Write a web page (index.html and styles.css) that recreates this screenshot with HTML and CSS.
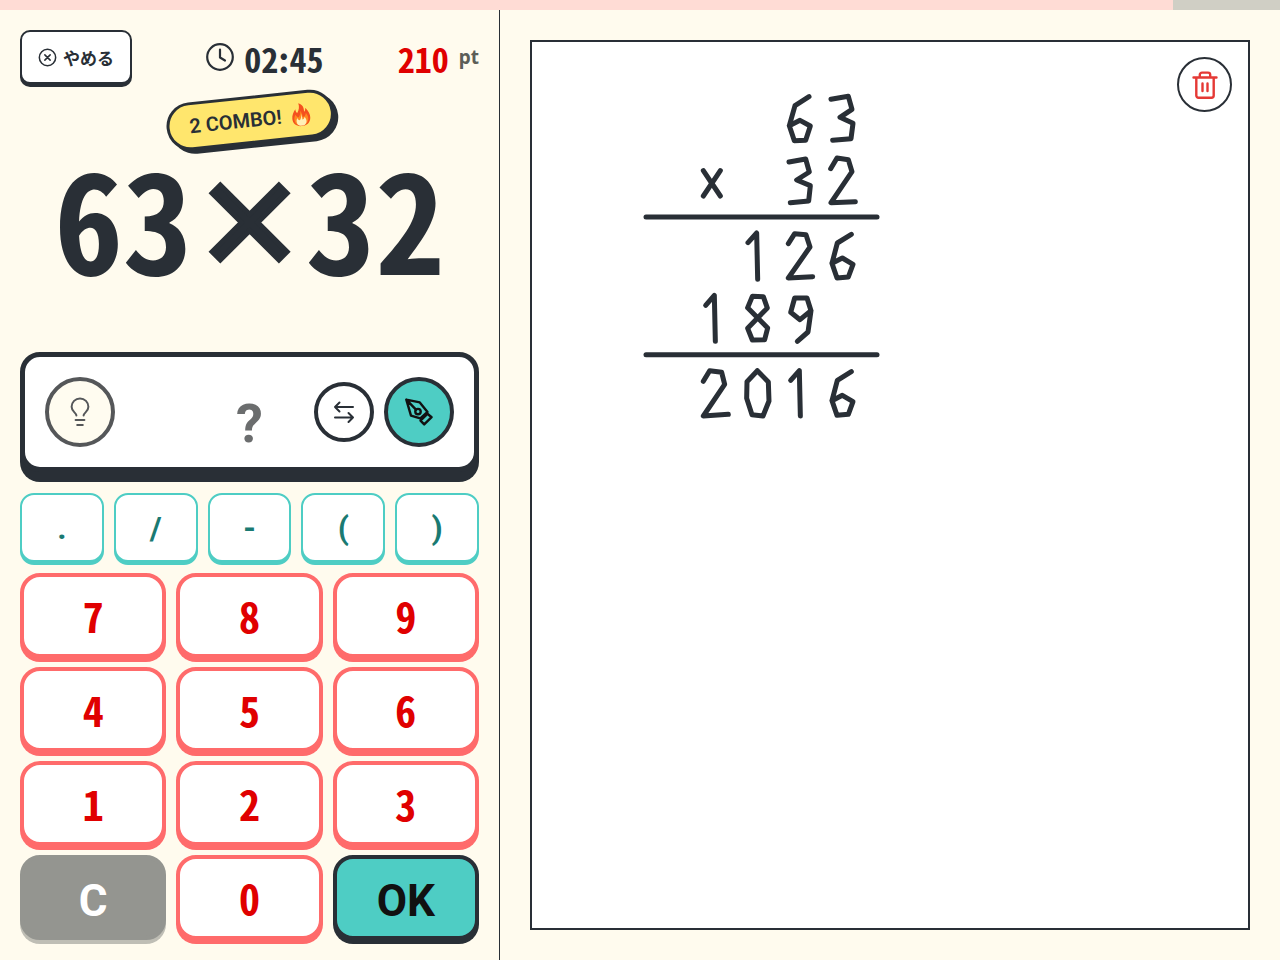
FILE: index.html
```html
<!DOCTYPE html>
<html lang="ja">
<head>
    <meta charset="UTF-8">
    <meta name="viewport" content="width=device-width, initial-scale=1.0">
    <title>けいさんドリル</title>
    <link rel="stylesheet" href="styles.css">
</head>
<body>
    <div class="progress">
        <div class="progress-bar" style="width: 91.67%"></div>
    </div>

    <main class="layout">
        <section class="panel">
            <header class="status">
                <button type="button" class="quit-btn">
                    <svg class="quit-icon" viewBox="0 0 20 20">
                        <circle cx="10" cy="10" r="8.6"/>
                        <path d="M7.2 7.2l5.6 5.6M12.8 7.2l-5.6 5.6"/>
                    </svg>
                    やめる
                </button>
                <div class="timer">
                    <svg class="clock-icon" viewBox="0 0 28 28">
                        <circle cx="14" cy="14" r="12.8"/>
                        <path d="M14 6.5V14.5L19 17.5"/>
                    </svg>
                    <span class="time">02<span class="colon">:</span>45</span>
                </div>
                <div class="score"><span class="points">210</span><span class="unit">pt</span></div>
            </header>

            <div class="question-area">
                <div class="combo">
                    <span>2 COMBO!</span>
                    <svg class="flame" viewBox="0 0 40 48">
                        <path fill="#f4511e" d="M17 1C28 6 27 14 27 19C29 17 30 14 30 11C36 18 39 25 38 32C37 42 29 47 20 47C9 47 2 41 2 31C2 23 6 17 10 12C10 16 11 18 13 20C17 15 19 8 17 1Z"/>
                        <path fill="#ff8a1f" d="M19 16C23 21 23 26 23 29C27 28 30 25 30 21C34 27 35 32 33 37C31 43 26 46 20 46C12 46 6 41 6 33C6 29 7 26 9 23C11 27 13 28 15 29C18 25 20 21 19 16Z"/>
                        <path fill="#fff0b8" d="M21 22C22 27 22 30 22 34C24 34 26 32 27 29C30 34 31 38 29 41C27 45 24 46 20 46C14 46 10 43 10 37C10 34 11 32 12 30C13 33 15 35 17 35C20 31 21 27 21 22Z"/>
                    </svg>
                </div>
                <h1 class="question">63<span class="operator">×</span>32</h1>
            </div>

            <div class="display">
                <button type="button" class="round-btn hint-btn" aria-label="ヒント">
                    <svg class="icon" viewBox="0 0 30 30">
                        <path d="M11.4 18.6C11.4 15.4 6.6 15 6.6 9.8A8.4 8.4 0 0 1 23.4 9.8C23.4 15 18.6 15.4 18.6 18.6M10.6 23h8.8M12.2 28h5.6"/>
                    </svg>
                </button>
                <output class="answer">?</output>
                <div class="tools">
                    <button type="button" class="round-btn swap-btn" aria-label="入れかえ">
                        <svg class="icon" viewBox="0 0 30 30">
                            <path d="M24 10H6M10.5 5.5L6 10l4.5 4.5M6 20.5h18M19.5 16l4.5 4.5L19.5 25"/>
                        </svg>
                    </button>
                    <button type="button" class="round-btn pen-btn" aria-label="ペン">
                        <svg class="icon bold" viewBox="0 0 30 30">
                            <path d="M2.3 2.6L15.8 5.4L23.5 15L16.3 21.3L7 18.6ZM2.3 2.6L12 12.7M23.4 16.8L27.6 20.2L20.2 27.4L16.5 23.6Z"/>
                            <circle cx="14" cy="14.6" r="2.7"/>
                        </svg>
                    </button>
                </div>
            </div>

            <div class="symbols">
                <button type="button" class="key symbol">.</button>
                <button type="button" class="key symbol">/</button>
                <button type="button" class="key symbol">-</button>
                <button type="button" class="key symbol">(</button>
                <button type="button" class="key symbol">)</button>
            </div>

            <div class="keypad">
                <button type="button" class="key digit">7</button>
                <button type="button" class="key digit">8</button>
                <button type="button" class="key digit">9</button>
                <button type="button" class="key digit">4</button>
                <button type="button" class="key digit">5</button>
                <button type="button" class="key digit">6</button>
                <button type="button" class="key digit">1</button>
                <button type="button" class="key digit">2</button>
                <button type="button" class="key digit">3</button>
                <button type="button" class="key clear">C</button>
                <button type="button" class="key digit">0</button>
                <button type="button" class="key ok">OK</button>
            </div>
        </section>

        <section class="memo">
            <div class="board">
                <!-- pen strokes, one polyline per stroke -->
                <svg class="strokes" viewBox="0 0 780 1050">
                    <polyline points="537,50 495,77 478,137 493,182 527,181 541,138 510,121 478,137"/>
                    <polyline points="603,58 655,49 666,88 630,112 669,130 663,176 608,181"/>
                    <polyline points="220,272 271,348"/>
                    <polyline points="271,272 220,348"/>
                    <polyline points="477,246 527,237 538,276 500,300 541,317 536,363 481,368"/>
                    <polyline points="602,266 621,234 655,239 666,275 603,368 676,365"/>
                    <polyline points="48,411 741,411"/>
                    <polyline points="354,488 380,459 383,598"/>
                    <polyline points="475,491 494,461 528,464 540,501 475,594 548,590"/>
                    <polyline points="664,463 622,489 606,550 621,594 655,591 669,553 637,534 606,550"/>
                    <polyline points="227,676 253,646 256,784"/>
                    <polyline points="353,683 367,649 400,650 412,684 353,745 367,780 404,779 413,744 353,683"/>
                    <polyline points="543,692 510,719 482,697 494,654 531,654 543,692 534,756 502,784"/>
                    <polyline points="48,824 741,824"/>
                    <polyline points="220,904 239,872 275,877 284,913 220,1008 295,1003"/>
                    <polyline points="382,872 351,905 350,955 366,1004 399,1008 417,963 415,906 382,872"/>
                    <polyline points="482,901 508,872 511,1008"/>
                    <polyline points="664,875 622,901 606,962 621,1006 655,1003 669,965 637,946 606,962"/>
                </svg>
                <button type="button" class="trash-btn" aria-label="ぜんぶ消す">
                    <svg class="icon bold" viewBox="0 0 30 30">
                        <path d="M3.5 7.5h23M6.3 7.5v18a2.2 2.2 0 0 0 2.2 2.2h13a2.2 2.2 0 0 0 2.2-2.2v-18M9.8 7v-2.2a2.2 2.2 0 0 1 2.2-2.2h6a2.2 2.2 0 0 1 2.2 2.2V7M12.5 13.5v7.5M17.5 13.5v7.5"/>
                    </svg>
                </button>
            </div>
        </section>
    </main>
</body>
</html>
```
FILE: styles.css
```css
* {
    box-sizing: border-box;
    margin: 0;
    padding: 0;
}

body {
    display: flex;
    flex-direction: column;
    min-height: 100vh;
    background: #fffbee;
    color: #292f36;
    font-family: Roboto, "Noto Sans CJK JP", sans-serif;
}

button {
    font-family: inherit;
    color: inherit;
    cursor: pointer;
}

svg {
    display: block;
    fill: none;
    stroke: currentColor;
    stroke-linecap: round;
    stroke-linejoin: round;
}

.icon {
    width: 30px;
    height: 30px;
    stroke-width: 2;
}

.icon.bold {
    stroke-width: 2.4;
}

.progress {
    height: 10px;
    background: #d0cfc5;
}

.progress-bar {
    height: 100%;
    background: #ffdcd5;
}

.layout {
    flex: 1;
    display: grid;
    grid-template-columns: minmax(0, 25fr) minmax(0, 39fr);
}

.panel {
    display: flex;
    flex-direction: column;
    padding: 20px;
    border-right: 1px solid #292f36;
}

/* Header */
.status {
    display: flex;
    justify-content: space-between;
    align-items: center;
    height: 54px;
    margin-bottom: 14px;
}

.quit-btn {
    display: flex;
    align-items: center;
    justify-content: center;
    gap: 6px;
    width: 112px;
    height: 54px;
    background: #fff;
    border: 2px solid #292f36;
    border-radius: 10px;
    box-shadow: 0 3px 0 #292f36;
    font-size: 17px;
    font-weight: 700;
}

.quit-icon {
    width: 19px;
    height: 19px;
    stroke-width: 1.6;
}

.timer {
    display: flex;
    align-items: center;
    gap: 10px;
}

.clock-icon {
    width: 28px;
    height: 28px;
    stroke-width: 2.2;
}

/* half-width numerals */
.time,
.points,
.question,
.digit {
    font-family: "Noto Sans CJK JP", sans-serif;
    font-feature-settings: "hwid";
    font-weight: 700;
}

.colon,
.operator {
    font-feature-settings: normal;
}

.time,
.points {
    padding-top: 4px;
    font-size: 34px;
    line-height: 40px;
}

.score {
    display: flex;
    align-items: center;
    gap: 10px;
}

.points {
    color: #e00000;
}

.unit {
    color: #5c5e58;
    font-family: "Noto Sans", sans-serif;
    font-size: 19px;
    font-weight: 700;
}

/* Question */
.question-area {
    flex: 1;
    position: relative;
    display: flex;
    align-items: center;
    justify-content: center;
    padding-bottom: 20px;
}

.question {
    display: flex;
    align-items: center;
    font-size: 138px;
    line-height: 160px;
}

.operator {
    padding-top: 4px;
    font-size: 114px;
    -webkit-text-stroke: 5px #292f36;
}

.combo {
    position: absolute;
    top: -2px;
    left: 50%;
    display: flex;
    align-items: center;
    gap: 9px;
    height: 48px;
    padding: 0 20px;
    background: #ffe66d;
    border: 3px solid #292f36;
    border-radius: 24px;
    box-shadow: 4px 4px 0 #292f36;
    font-size: 20px;
    font-weight: 600;
    white-space: nowrap;
    transform: translateX(-50%) rotate(-6deg);
}

.flame {
    width: 20px;
    height: 24px;
    stroke: none;
}

/* Answer display */
.display {
    display: grid;
    grid-template-columns: 1fr auto 1fr;
    align-items: center;
    height: 120px;
    padding: 0 20px;
    background: #fff;
    border: 5px solid #292f36;
    border-radius: 20px;
    box-shadow: 0 10px 0 #292f36;
}

.round-btn {
    display: grid;
    place-items: center;
    width: 70px;
    height: 70px;
    border: 4px solid #292f36;
    border-radius: 50%;
}

.hint-btn {
    background: #fffcf0;
    border-color: #555759;
    color: #555759;
}

.swap-btn {
    width: 60px;
    height: 60px;
    background: #fff;
}

.pen-btn {
    background: #4ecdc4;
    color: #111;
}

.answer {
    padding-top: 22px;
    color: #6b6d6e;
    font-size: 54px;
    font-weight: 700;
}

.tools {
    display: flex;
    align-items: center;
    justify-content: flex-end;
    gap: 10px;
}

/* Keys */
.symbols {
    display: grid;
    grid-template-columns: repeat(5, 1fr);
    gap: 10px;
    margin: 21px 0 11px;
}

.keypad {
    display: grid;
    grid-template-columns: repeat(3, 1fr);
    gap: 9px 10px;
}

.key {
    background: #fff;
    font-weight: 700;
}

.symbol {
    height: 69px;
    border: 2px solid #4ecdc4;
    border-radius: 14px;
    box-shadow: 0 3px 0 #4ecdc4;
    color: #1a7a72;
    font-size: 32px;
}

.digit,
.clear,
.ok {
    height: 85px;
    border: 4px solid #ff6b6b;
    border-radius: 20px;
    box-shadow: 0 4px 0 #ff6b6b;
    font-size: 44px;
}

.digit {
    padding-bottom: 2px;
    color: #e00000;
    font-size: 42px;
}

.clear,
.ok {
    padding-top: 6px;
}

.clear {
    background: #949590;
    border-color: #949590;
    box-shadow: 0 4px 0 #bfbeb5;
    color: #fff;
}

.ok {
    background: #4ecdc4;
    border-color: #292f36;
    box-shadow: 0 4px 0 #292f36;
    color: #111;
}

/* Memo board */
.memo {
    display: flex;
    padding: 30px;
}

.board {
    flex: 1;
    position: relative;
    background: #fff;
    border: 2px solid #292f36;
}

.strokes {
    position: absolute;
    top: 38px;
    left: 98px;
    width: 260px;
    height: 350px;
    stroke-width: 15;
}

.trash-btn {
    position: absolute;
    top: 15px;
    right: 16px;
    display: grid;
    place-items: center;
    width: 55px;
    height: 55px;
    background: #fff;
    border: 2px solid #292f36;
    border-radius: 50%;
    color: #e53935;
}
```
